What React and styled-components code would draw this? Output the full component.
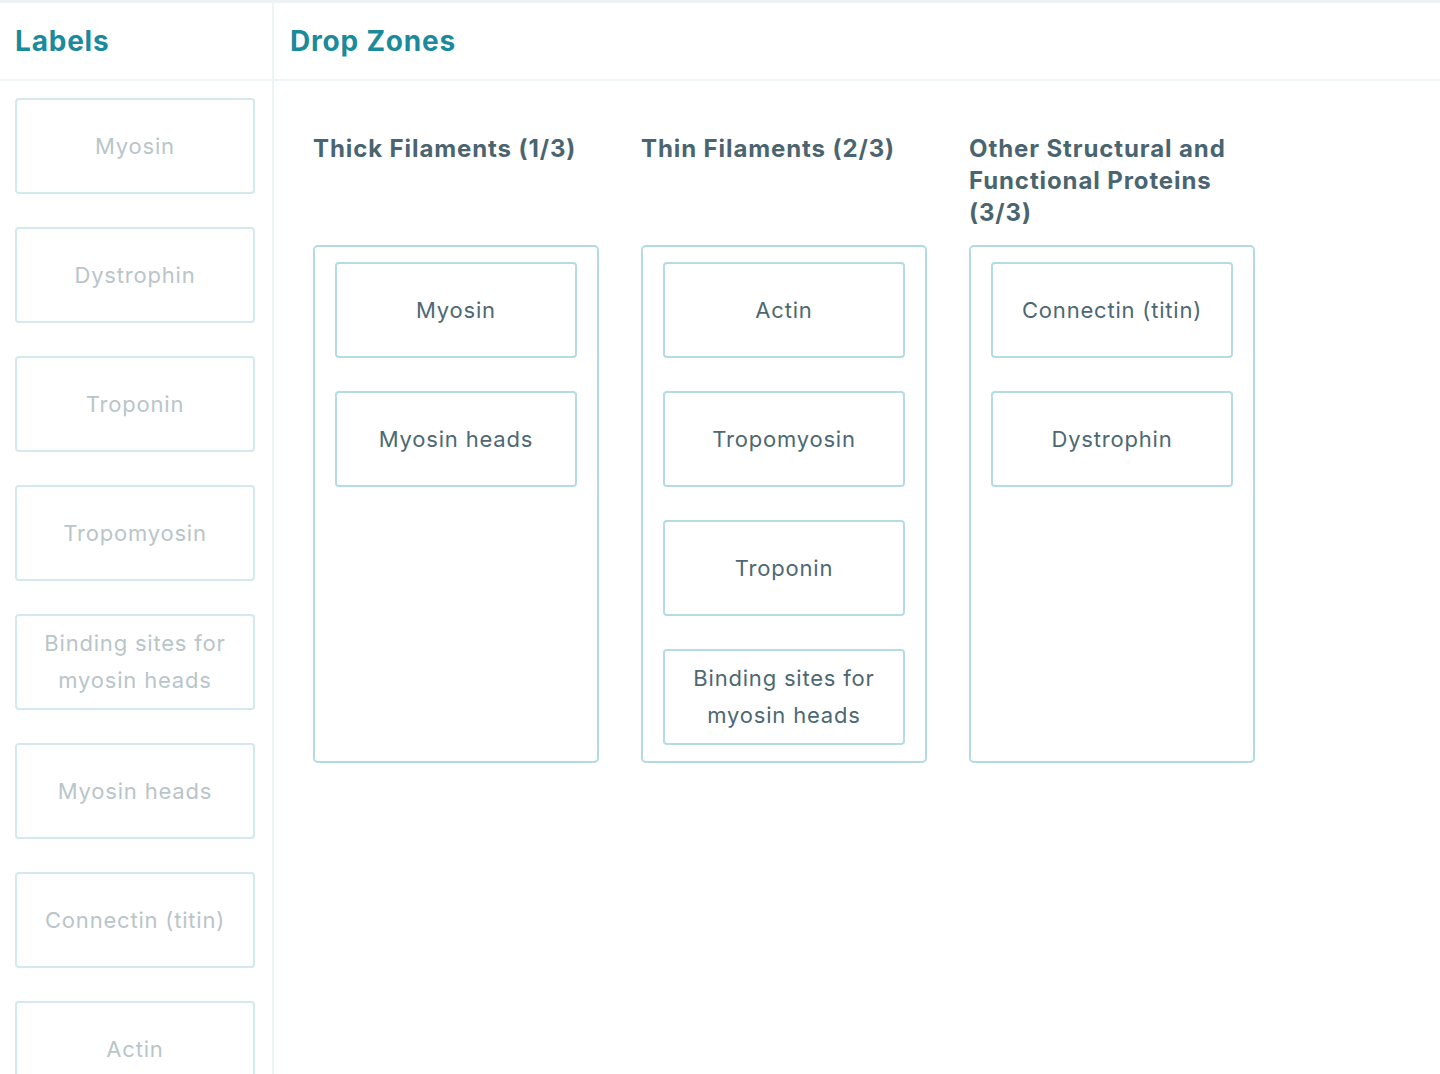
import styled, { createGlobalStyle } from 'styled-components';

const GlobalStyle = createGlobalStyle`
  html, body {
    margin: 0;
    padding: 0;
    background: #ffffff;
    font-family: Inter, "Open Sans", Arial, sans-serif;
  }
`;

const Page = styled.div`
  height: 100vh;
  overflow: hidden;
  border-top: 3px solid #eef2f4;
  box-sizing: border-box;
  display: grid;
  grid-template-columns: 274px 1fr;
  grid-template-rows: 78px 1fr;
`;

const HeaderCell = styled.div`
  display: flex;
  align-items: center;
  padding-left: ${({ $pad }) => $pad}px;
  border-bottom: 2px solid #eef3f5;
  border-right: ${({ $divider }) => ($divider ? '2px solid #eef3f5' : 'none')};
`;

const Heading = styled.h2`
  margin: 0;
  font-size: 28px;
  font-weight: 700;
  color: #1b8a9b;
  letter-spacing: 0.8px;
`;

const Sidebar = styled.div`
  border-right: 2px solid #eef3f5;
  padding: 17px 17px 0 15px;
  display: flex;
  flex-direction: column;
  gap: 33px;
`;

const Card = styled.div`
  box-sizing: border-box;
  height: 96px;
  flex-shrink: 0;
  border: 2px solid ${({ $placed }) => ($placed ? '#b5dbe3' : '#d3e9ee')};
  border-radius: 4px;
  background: #fff;
  display: flex;
  align-items: center;
  justify-content: center;
  text-align: center;
  padding: 0 14px;
  font-size: 22px;
  line-height: 37px;
  letter-spacing: 0.8px;
  color: ${({ $placed }) => ($placed ? '#4d6872' : '#b9c5c9')};
`;

const Zones = styled.div`
  padding: 52px 0 0 39px;
  display: grid;
  grid-template-columns: repeat(3, 286px);
  grid-template-rows: auto auto;
  column-gap: 42px;
  row-gap: 16px;
  align-content: start;
`;

const ZoneTitle = styled.h3`
  margin: 0;
  font-size: 24px;
  line-height: 32px;
  font-weight: 700;
  letter-spacing: 0.9px;
  color: #4a6570;
  padding-right: 10px;
`;

const ZoneBox = styled.div`
  box-sizing: border-box;
  border: 2px solid #b3dae2;
  border-radius: 5px;
  padding: 15px 20px 16px 20px;
  display: flex;
  flex-direction: column;
  gap: 33px;
`;

const labels = [
  'Myosin',
  'Dystrophin',
  'Troponin',
  'Tropomyosin',
  'Binding sites for myosin heads',
  'Myosin heads',
  'Connectin (titin)',
  'Actin',
];

const zones = [
  { title: 'Thick Filaments (1/3)', items: ['Myosin', 'Myosin heads'] },
  {
    title: 'Thin Filaments (2/3)',
    items: ['Actin', 'Tropomyosin', 'Troponin', 'Binding sites for myosin heads'],
  },
  {
    title: 'Other Structural and Functional Proteins (3/3)',
    items: ['Connectin (titin)', 'Dystrophin'],
  },
];

export default function App() {
  return (
    <>
      <GlobalStyle />
      <Page>
        <HeaderCell $pad={15} $divider>
          <Heading>Labels</Heading>
        </HeaderCell>
        <HeaderCell $pad={16}>
          <Heading>Drop Zones</Heading>
        </HeaderCell>

        <Sidebar>
          {labels.map((l) => (
            <Card key={l}>{l}</Card>
          ))}
        </Sidebar>

        <Zones>
          {zones.map((z) => (
            <ZoneTitle key={z.title}>{z.title}</ZoneTitle>
          ))}
          {zones.map((z) => (
            <ZoneBox key={z.title + '-box'}>
              {z.items.map((it) => (
                <Card key={it} $placed>
                  {it}
                </Card>
              ))}
            </ZoneBox>
          ))}
        </Zones>
      </Page>
    </>
  );
}
